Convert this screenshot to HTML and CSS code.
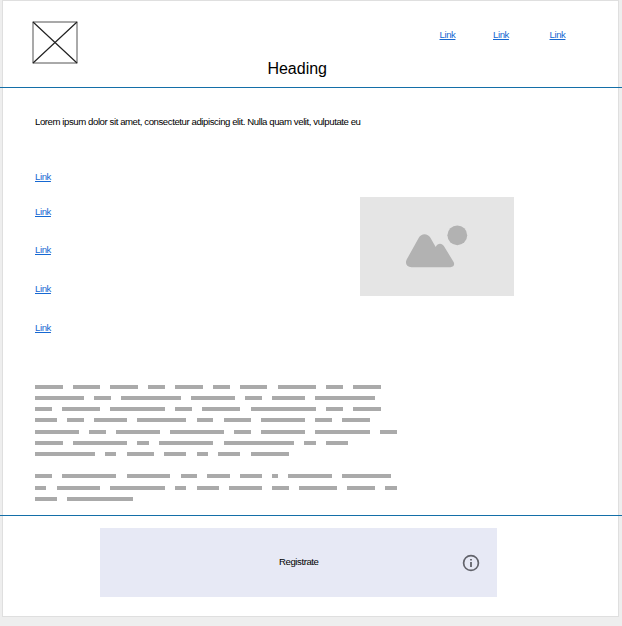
FILE: index.html
```html
<!DOCTYPE html>
<html lang="en">
<head>
<meta charset="utf-8">
<title>Wireframe</title>
<link rel="stylesheet" href="styles.css">
</head>
<body>
<div class="sheet">
  <header class="header">
    <svg class="logo" width="46" height="43" viewBox="0 0 46 43" fill="none">
      <rect x="1" y="1" width="44" height="41" stroke="#555"/>
      <path d="M1 1L45 42M45 1L1 42" stroke="#222" stroke-width="1.2"/>
    </svg>
    <h1 class="heading">Heading</h1>
    <nav class="nav"><a href="#">Link</a><a href="#">Link</a><a href="#">Link</a></nav>
  </header>
  <main class="main">
    <p class="intro">Lorem ipsum dolor sit amet, consectetur adipiscing elit. Nulla quam velit, vulputate eu</p>
    <div class="columns">
      <nav class="side"><a href="#">Link</a><a href="#">Link</a><a href="#">Link</a><a href="#">Link</a><a href="#">Link</a></nav>
      <div class="image">
        <svg width="154" height="98" viewBox="0 0 154 98" fill="#b2b2b2">
          <circle cx="97.3" cy="38.3" r="9.9"/>
          <path d="M46.7 62.5L58.8 40.8C61.2 36 67.8 36 70.4 40.8L75.7 50C77.6 45.8 82 45.8 84 49.2L93.3 64.5C95.2 67.5 93.8 70.2 90.5 70.2H51.5C46.5 70.2 44.8 66.5 46.7 62.5Z"/>
        </svg>
      </div>
    </div>
    <div class="filler">
      <div class="row"><i class="w5"></i><i class="w5"></i><i class="w5"></i><i class="w3"></i><i class="w5"></i><i class="w3"></i><i class="w5"></i><i class="w7"></i><i class="w3"></i><i class="w5"></i></div>
      <div class="row"><i class="w9"></i><i class="w3"></i><i class="w11"></i><i class="w8"></i><i class="w3"></i><i class="w6"></i><i class="w11"></i></div>
      <div class="row"><i class="w3"></i><i class="w7"></i><i class="w10"></i><i class="w3"></i><i class="w7"></i><i class="w12"></i><i class="w3"></i><i class="w5"></i></div>
      <div class="row loose"><i class="w4"></i><i class="w3"></i><i class="w6"></i><i class="w9"></i><i class="w3"></i><i class="w5"></i><i class="w8"></i><i class="w3"></i><i class="w5"></i></div>
      <div class="row"><i class="w8"></i><i class="w3"></i><i class="w8"></i><i class="w10"></i><i class="w3"></i><i class="w8"></i><i class="w10"></i><i class="w3"></i></div>
      <div class="row"><i class="w5"></i><i class="w10"></i><i class="w2"></i><i class="w10"></i><i class="w13"></i><i class="w2"></i><i class="w4"></i></div>
      <div class="row last"><i class="w11"></i><i class="w2"></i><i class="w5"></i><i class="w4"></i><i class="w2"></i><i class="w4"></i><i class="w7"></i></div>
      <div class="row loose"><i class="w3"></i><i class="w10"></i><i class="w8"></i><i class="w3"></i><i class="w4"></i><i class="w4"></i><i class="w1"></i><i class="w8"></i><i class="w9"></i></div>
      <div class="row"><i class="w2"></i><i class="w8"></i><i class="w10"></i><i class="w2"></i><i class="w4"></i><i class="w6"></i><i class="w3"></i><i class="w7"></i><i class="w5"></i><i class="w2"></i></div>
      <div class="row"><i class="w4"></i><i class="w12"></i></div>
    </div>
  </main>
  <footer class="footer">
    <div class="banner">
      <span class="label">Registrate</span>
      <svg class="info" width="18" height="18" viewBox="0 0 18 18" fill="none" stroke="#62636b">
        <circle cx="9" cy="9" r="7.4" stroke-width="1.7"/>
        <path d="M9 8V13M9 5V6.6" stroke-width="1.8"/>
      </svg>
    </div>
  </footer>
</div>
</body>
</html>
```
FILE: styles.css
```css
* { box-sizing: border-box; }
body {
  margin: 0;
  height: 626px;
  overflow: hidden;
  background: #eee;
  font: 9.6px/12px "Liberation Sans", Arial, sans-serif;
  letter-spacing: -0.42px;
  color: #000;
}
.sheet {
  height: 618px;
  background: linear-gradient(#fff, #fff) 3px 1px / 615px 615px no-repeat,
              linear-gradient(#dfdfdf, #dfdfdf) 2px 0 / 617px 617px no-repeat;
}
a { color: #1668d2; text-decoration: underline; }
.header {
  height: 88px;
  border-bottom: 1px solid #146fa8;
  display: grid;
  grid-template-columns: 78px 1fr 182.5px;
}
.logo { margin: 21px 0 0 32px; }
.heading {
  margin: 60px 0 0 189.4px;
  font-size: 16px;
  line-height: 18px;
  font-weight: 400;
  letter-spacing: 0;
}
.nav { display: flex; margin-top: 29px; }
.nav a { width: 53.5px; }
.nav a:nth-child(2) { width: 56.5px; }
.main { height: 428px; padding: 28px 0 0 35px; border-bottom: 1px solid #146fa8; }
.intro { margin: 0; white-space: nowrap; }
.columns { display: flex; margin-top: 43px; height: 214px; }
.side { width: 325px; display: flex; flex-direction: column; gap: 27px; }
.side a { width: 20px; height: 12px; }
.side a:first-child { margin-bottom: -4px; }
.side a:nth-child(2) { margin-bottom: -1px; }
.image { width: 154px; height: 98.5px; margin-top: 26px; background: #e5e5e5; }
.image svg, .info { display: block; }
.row { display: flex; gap: 10.2px; height: 4px; margin-bottom: 7px; }
.row.loose { margin-bottom: 8px; }
.row.last { margin-bottom: 18px; }
.row i { background: #aaa; }
.w1 { width: 6px; }
.w2 { width: 11.35px; }
.w3 { width: 16.75px; }
.w4 { width: 22.15px; }
.w5 { width: 27.55px; }
.w6 { width: 32.9px; }
.w7 { width: 38.3px; }
.w8 { width: 43.7px; }
.w9 { width: 49.1px; }
.w10 { width: 54.5px; }
.w11 { width: 59.9px; }
.w12 { width: 65.3px; }
.w13 { width: 70.6px; }
.footer { padding: 12px 0 0 100px; }
.banner {
  width: 397px;
  height: 69px;
  display: flex;
  align-items: center;
  justify-content: space-between;
  padding: 0 17px 0 179px;
  background: #e7e9f5;
}
.label { margin-bottom: 2px; }
```
